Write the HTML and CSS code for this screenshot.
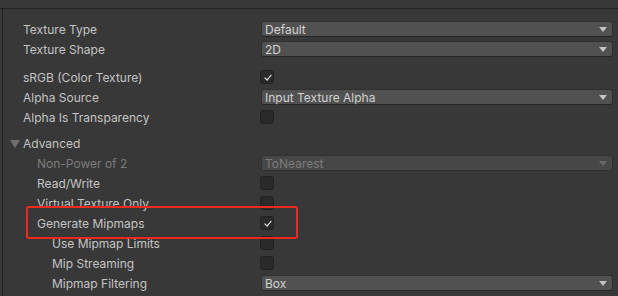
FILE: index.html
```html
<!DOCTYPE html>
<html lang="en">
<head>
    <meta charset="UTF-8">
    <title>Texture Import Settings</title>
    <link rel="stylesheet" href="styles.css">
</head>
<body>
    <div class="topbar"></div>
    <div class="panel">
        <div class="group">
            <div class="row">
                <div class="label">Texture Type</div>
                <div class="field"><div class="dropdown"><span>Default</span><i class="arrow"></i></div></div>
            </div>
            <div class="row">
                <div class="label">Texture Shape</div>
                <div class="field"><div class="dropdown"><span>2D</span><i class="arrow"></i></div></div>
            </div>
        </div>

        <div class="group">
            <div class="row">
                <div class="label">sRGB (Color Texture)</div>
                <div class="field"><div class="checkbox checked"></div></div>
            </div>
            <div class="row">
                <div class="label">Alpha Source</div>
                <div class="field"><div class="dropdown"><span>Input Texture Alpha</span><i class="arrow"></i></div></div>
            </div>
            <div class="row">
                <div class="label">Alpha Is Transparency</div>
                <div class="field"><div class="checkbox"></div></div>
            </div>
        </div>

        <div class="group">
            <div class="row foldout">
                <div class="label"><i class="fold-arrow"></i>Advanced</div>
            </div>
            <div class="row disabled">
                <div class="label indent1">Non-Power of 2</div>
                <div class="field"><div class="dropdown"><span>ToNearest</span><i class="arrow"></i></div></div>
            </div>
            <div class="row">
                <div class="label indent1">Read/Write</div>
                <div class="field"><div class="checkbox"></div></div>
            </div>
            <div class="row">
                <div class="label indent1">Virtual Texture Only</div>
                <div class="field"><div class="checkbox"></div></div>
            </div>
            <div class="row highlighted">
                <div class="label indent1">Generate Mipmaps</div>
                <div class="field"><div class="checkbox checked"></div></div>
                <span class="mark"></span>
            </div>
            <div class="row">
                <div class="label indent2">Use Mipmap Limits</div>
                <div class="field"><div class="checkbox"></div></div>
            </div>
            <div class="row">
                <div class="label indent2">Mip Streaming</div>
                <div class="field"><div class="checkbox"></div></div>
            </div>
            <div class="row">
                <div class="label indent2">Mipmap Filtering</div>
                <div class="field"><div class="dropdown"><span>Box</span><i class="arrow"></i></div></div>
            </div>
        </div>
    </div>
</body>
</html>
```

FILE: styles.css
```css
* {
    margin: 0;
    padding: 0;
    box-sizing: border-box;
}

body {
    width: 618px;
    height: 296px;
    overflow: hidden;
    background: #383838;
    font-family: Inter, "Noto Sans", sans-serif;
    font-size: 12px;
    color: #c4c4c4;
}

.topbar {
    height: 9px;
    border-bottom: 1px solid #232323;
}

.panel {
    margin-left: 2px;
    height: 287px;
    border-left: 1px solid #232323;
    padding-top: 10px;
}

.group + .group {
    margin-top: 8px;
}

.group:last-child {
    margin-top: 6px;
}

.row {
    display: flex;
    align-items: center;
    height: 20px;
    position: relative;
}

.label {
    width: 257px;
    padding-left: 20px;
    white-space: nowrap;
    display: flex;
    align-items: center;
}

.label.indent1 {
    padding-left: 34px;
}

.label.indent2 {
    padding-left: 49px;
}

.field {
    flex: 1;
    margin-right: 5px;
    display: flex;
    align-items: center;
}

.dropdown {
    flex: 1;
    height: 16px;
    margin-left: 1px;
    padding-left: 3px;
    background: #515151;
    border: 1px solid #303030;
    border-bottom-color: #262626;
    border-radius: 3px;
    display: flex;
    align-items: center;
    justify-content: space-between;
    color: #d2d2d2;
}

.arrow {
    width: 0;
    height: 0;
    margin-right: 5px;
    border-left: 4px solid transparent;
    border-right: 4px solid transparent;
    border-top: 5px solid #c4c4c4;
}

.checkbox {
    width: 14px;
    height: 14px;
    background: #2a2a2a;
    border: 1px solid #212121;
    border-radius: 3px;
    position: relative;
}

.checkbox.checked::after {
    content: "";
    position: absolute;
    left: 4.5px;
    top: 2px;
    width: 2.5px;
    height: 6px;
    border-right: 1.5px solid #e8e8e8;
    border-bottom: 1.5px solid #e8e8e8;
    transform: rotate(40deg);
}

.foldout .label {
    padding-left: 7px;
}

.fold-arrow {
    width: 0;
    height: 0;
    margin-right: 3px;
    margin-top: 1px;
    border-left: 5px solid transparent;
    border-right: 5px solid transparent;
    border-top: 8px solid #6f6f6f;
}

.disabled .label {
    color: #7c7c7c;
}

.disabled .dropdown {
    background: #474747;
    border-color: #303030;
    color: #7c7c7c;
}

.disabled .arrow {
    border-top-color: #6a6a6a;
}

.mark {
    position: absolute;
    left: 23px;
    top: -7px;
    width: 272px;
    height: 33px;
    border: 2px solid #ee2a1e;
    border-radius: 3px;
    z-index: 2;
}
```
